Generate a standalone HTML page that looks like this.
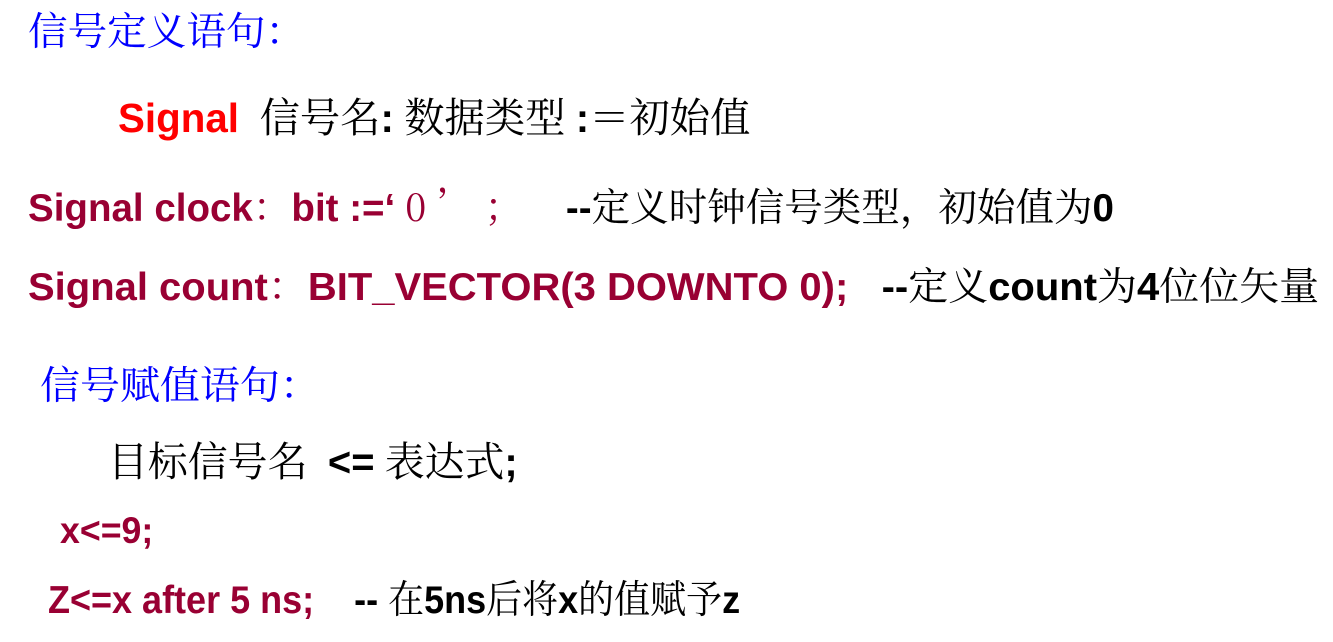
<!DOCTYPE html>
<html><head><meta charset="utf-8"><style>
html,body{margin:0;padding:0;background:#fff;width:1333px;height:642px;overflow:hidden}
.l{position:absolute;white-space:pre;line-height:1;transform-origin:0 0}
.cj{font-family:"Liberation Serif","Noto Serif CJK SC",serif}
.s{font-family:"Liberation Sans","Noto Sans CJK SC",sans-serif;font-weight:bold}
.m{color:#990033}
.k{color:#000}
.c{font-family:"Noto Serif CJK SC",serif;font-weight:normal}
</style></head><body>
<div class="l cj" style="left:28px;top:13px;font-size:39px;color:#0000ff;transform:scaleX(1.015)">信号定义语句：</div>
<div class="l" style="left:118px;top:94px;font-size:41px;transform:scaleX(0.983)"><span class="s" style="color:#ff0000">Signal</span><span class="c k">  信号名</span><span class="s k">:</span><span class="c k"> 数据类型 </span><span class="s k">:</span><span class="c k">＝初始值</span></div>
<div class="l m" style="left:28px;top:186px;font-size:39px;transform:scaleX(0.988)"><span class="s">Signal clock</span><span class="c">：</span><span class="s">bit :=‘</span><span class="c"> 0 ’ ；</span><span class="s k">    --</span><span class="c k">定义时钟信号类型，初始值为</span><span class="s k">0</span></div>
<div class="l m" style="left:28px;top:265px;font-size:39px;transform:scaleX(1.025)"><span class="s">Signal count</span><span class="c">：</span><span class="s">BIT_VECTOR(3 DOWNTO 0);</span><span class="s k">   --</span><span class="c k">定义</span><span class="s k">count</span><span class="c k">为</span><span class="s k">4</span><span class="c k">位位矢量</span></div>
<div class="l cj" style="left:40px;top:367px;font-size:39px;color:#0000ff;transform:scaleX(1.025)">信号赋值语句：</div>
<div class="l" style="left:108px;top:438px;font-size:41px;transform:scaleX(0.973)"><span class="c k">目标信号名  </span><span class="s k">&lt;=</span><span class="c k"> 表达式</span><span class="s k">;</span></div>
<div class="l s m" style="left:60px;top:512px;font-size:37px;transform:scaleX(0.965)">x&lt;=9;</div>
<div class="l" style="left:48px;top:578px;font-size:39px;transform:scaleX(0.923)"><span class="s m">Z&lt;=x after 5 ns;</span><span class="s k">    -- </span><span class="c k">在</span><span class="s k">5ns</span><span class="c k">后将</span><span class="s k">x</span><span class="c k">的值赋予</span><span class="s k">z</span></div>
</body></html>
